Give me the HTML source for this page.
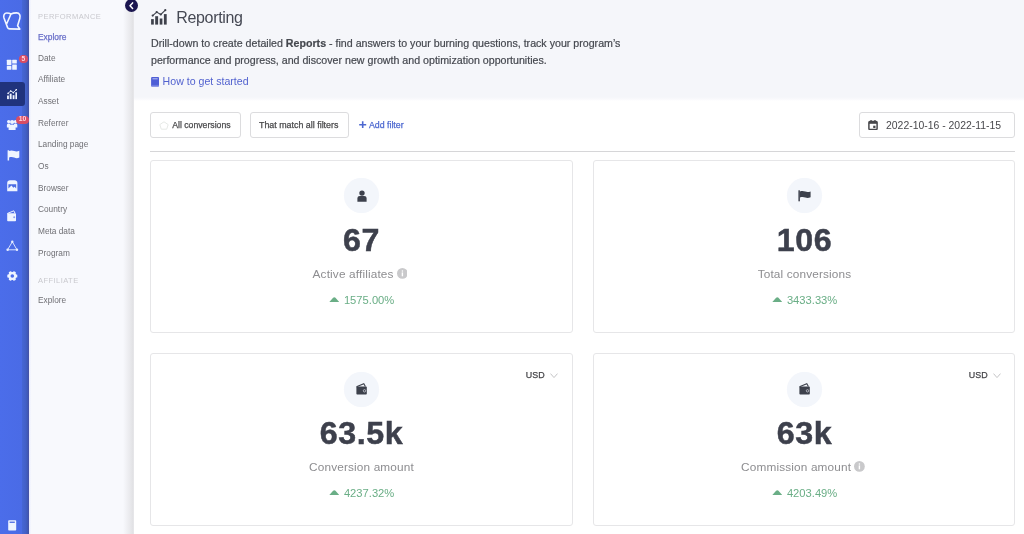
<!DOCTYPE html>
<html><head><meta charset="utf-8">
<style>
*{margin:0;padding:0;box-sizing:border-box}
html,body{width:1024px;height:534px;overflow:hidden;background:#fff;font-family:"Liberation Sans",sans-serif}
body{will-change:transform}
.a{position:absolute}
.t{position:absolute;line-height:1;white-space:nowrap}
#rail{left:0;top:0;width:29px;height:534px;background:linear-gradient(90deg,#4b6dea 0%,#4a6be6 74%,#4566d4 77%,#4260c8 88%,#3f58b4 96%,#4850a0 100%)}
#railedge{left:29px;top:0;width:2px;height:534px;background:linear-gradient(90deg,#e6eaff,#f7f8fd)}
#sub{left:29px;top:0;width:104px;height:534px;background:#f8f9fd}
#subsh{left:123px;top:0;width:11px;height:534px;background:linear-gradient(90deg,rgba(228,228,231,0) 0%,rgba(228,228,231,.7) 60%,rgba(226,226,229,1) 88%,rgba(232,232,235,1) 100%)}
#hdr{left:134px;top:0;width:890px;height:101px;background:linear-gradient(180deg,#f5f6fa 0,#f5f6fa 97px,#f9f9fc 99px,#fff 101px)}
.nav{left:38px;font-size:8.3px;color:#707075}
.sec{left:38px;font-size:7.5px;letter-spacing:.45px;color:#c9c9ce}
.btn{border:1px solid #dcdcde;border-radius:3px;background:#fff}
.card{border:1px solid #e6e6e8;border-radius:3px;background:#fff;width:422px;height:173px}
.circ{width:35px;height:35px;border-radius:50%;background:#f3f6fb;box-shadow:0 0 1px #f6f8fc}
.num{font-weight:700;font-size:32.2px;letter-spacing:.6px;-webkit-text-stroke:.5px #3d404c;color:#3d404c;text-align:center;width:422px}
.sb{-webkit-text-stroke:.25px currentColor}
.row{width:422px;display:flex;justify-content:center;align-items:center;white-space:nowrap}
.lbl{font-size:11.8px;line-height:12px;letter-spacing:.15px;color:#8d8d90}
.pct{font-size:11.2px;line-height:12px;color:#6aae86}
</style></head><body>
<div id="rail" class="a"></div>
<div id="sub" class="a"></div>
<div id="subsh" class="a"></div>
<div id="railedge" class="a"></div>
<div id="hdr" class="a"></div>

<!-- secondary nav -->
<div class="t sec" style="top:13.4px">PERFORMANCE</div>
<div class="t nav sb" style="top:32.8px;font-size:8.4px;color:#6a70c9">Explore</div>
<div class="t nav" style="top:53.8px">Date</div>
<div class="t nav" style="top:75.4px">Affiliate</div>
<div class="t nav" style="top:97.1px">Asset</div>
<div class="t nav" style="top:118.7px">Referrer</div>
<div class="t nav" style="top:140.4px">Landing page</div>
<div class="t nav" style="top:162.0px">Os</div>
<div class="t nav" style="top:183.7px">Browser</div>
<div class="t nav" style="top:205.3px">Country</div>
<div class="t nav" style="top:227.0px">Meta data</div>
<div class="t nav" style="top:248.8px">Program</div>
<div class="t sec" style="top:276.9px">AFFILIATE</div>
<div class="t nav" style="top:296.1px">Explore</div>

<!-- header -->
<div class="t" style="left:176.3px;top:9.6px;font-size:16px;letter-spacing:-0.35px;color:#464954">Reporting</div>
<div class="a" style="left:151px;top:35.1px;width:600px;font-size:10.65px;line-height:17px;color:#45484f;-webkit-text-stroke:.2px #45484f;white-space:nowrap">Drill-down to create detailed <b>Reports</b> - find answers to your burning questions, track your program’s<br>performance and progress, and discover new growth and optimization opportunities.</div>
<div class="t" style="left:162.6px;top:76.2px;font-size:10.6px;color:#5262cf">How to get started</div>

<!-- filters -->
<div class="a btn" style="left:150px;top:112px;width:91px;height:26px"></div>
<div class="t sb" style="left:172.2px;top:120.6px;font-size:8.7px;color:#4a4a4c">All conversions</div>
<div class="a btn" style="left:249.5px;top:112px;width:99px;height:26px"></div>
<div class="t sb" style="left:259px;top:120.6px;font-size:8.9px;color:#4a4a4c">That match all filters</div>
<div class="t sb" style="left:368.9px;top:120.9px;font-size:8.8px;color:#4d68d0">Add filter</div>
<div class="a btn" style="left:859px;top:112px;width:156px;height:26px"></div>
<div class="t" style="left:886px;top:120.6px;font-size:10.43px;color:#48484c">2022-10-16 - 2022-11-15</div>
<div class="a" style="left:150px;top:151px;width:865px;height:1px;background:#d6d6d8"></div>

<!-- cards -->
<div class="a card" style="left:150px;top:160px;width:423px"></div>
<div class="a card" style="left:593px;top:160px"></div>
<div class="a card" style="left:150px;top:353px;width:423px"></div>
<div class="a card" style="left:593px;top:353px"></div>

<div class="a circ" style="left:344px;top:178.4px"></div>
<div class="a circ" style="left:786.7px;top:178.4px"></div>
<div class="a circ" style="left:344px;top:371.7px"></div>
<div class="a circ" style="left:786.7px;top:371.7px"></div>

<div class="t num" style="left:150.5px;top:224.1px">67</div>
<div class="t num" style="left:593.5px;top:224.1px">106</div>
<div class="t num" style="left:150.5px;top:417.3px">63.5k</div>
<div class="t num" style="left:593.5px;top:417.3px">63k</div>



<div class="a row" style="left:150.5px;top:267.5px;height:12px"><span class="lbl">Active affiliates</span><svg width="10.8" height="10.8" viewBox="0 0 10.8 10.8" style="margin-left:3px;margin-right:3px;flex:none"><circle cx="5.4" cy="5.4" r="5.4" fill="#c9c9cb"/><rect x="4.7" y="4.4" width="1.4" height="3.9" fill="#fff"/><circle cx="5.4" cy="3" r=".8" fill="#fff"/></svg></div>
<div class="a row" style="left:150.5px;top:293.5px;height:12px"><svg width="10.6" height="5.6" viewBox="0 0 10.6 5.6" style="margin-right:4.6px;flex:none"><path d="M5.3 0.2 C5.8 0.2 6.1 0.4 6.5 0.8 L10.6 5.4 L0 5.4 L4.1 0.8 C4.5 0.4 4.8 0.2 5.3 0.2 Z" fill="#6aae86"/></svg><span class="pct">1575.00%</span></div>
<div class="a row" style="left:593.5px;top:267.5px;height:12px"><span class="lbl">Total conversions</span></div>
<div class="a row" style="left:593.5px;top:293.5px;height:12px"><svg width="10.6" height="5.6" viewBox="0 0 10.6 5.6" style="margin-right:4.6px;flex:none"><path d="M5.3 0.2 C5.8 0.2 6.1 0.4 6.5 0.8 L10.6 5.4 L0 5.4 L4.1 0.8 C4.5 0.4 4.8 0.2 5.3 0.2 Z" fill="#6aae86"/></svg><span class="pct">3433.33%</span></div>
<div class="a row" style="left:150.5px;top:460.5px;height:12px"><span class="lbl">Conversion amount</span></div>
<div class="a row" style="left:150.5px;top:486.5px;height:12px"><svg width="10.6" height="5.6" viewBox="0 0 10.6 5.6" style="margin-right:4.6px;flex:none"><path d="M5.3 0.2 C5.8 0.2 6.1 0.4 6.5 0.8 L10.6 5.4 L0 5.4 L4.1 0.8 C4.5 0.4 4.8 0.2 5.3 0.2 Z" fill="#6aae86"/></svg><span class="pct">4237.32%</span></div>
<div class="a row" style="left:593.5px;top:460.5px;height:12px"><span class="lbl">Commission amount</span><svg width="10.8" height="10.8" viewBox="0 0 10.8 10.8" style="margin-left:3px;margin-right:3px;flex:none"><circle cx="5.4" cy="5.4" r="5.4" fill="#c9c9cb"/><rect x="4.7" y="4.4" width="1.4" height="3.9" fill="#fff"/><circle cx="5.4" cy="3" r=".8" fill="#fff"/></svg></div>
<div class="a row" style="left:593.5px;top:486.5px;height:12px"><svg width="10.6" height="5.6" viewBox="0 0 10.6 5.6" style="margin-right:4.6px;flex:none"><path d="M5.3 0.2 C5.8 0.2 6.1 0.4 6.5 0.8 L10.6 5.4 L0 5.4 L4.1 0.8 C4.5 0.4 4.8 0.2 5.3 0.2 Z" fill="#6aae86"/></svg><span class="pct">4203.49%</span></div>
<div class="t sb" style="left:525.8px;top:371.2px;font-size:8.9px;color:#46464a">USD</div>
<div class="t sb" style="left:968.8px;top:371.2px;font-size:8.9px;color:#46464a">USD</div>


<svg class="a" style="left:549.6px;top:373px" width="8" height="5.5" viewBox="0 0 8 5.5"><polyline points="0.5,0.6 4,4.6 7.5,0.6" fill="none" stroke="#c4c4c6" stroke-width="1"/></svg>
<svg class="a" style="left:992.6px;top:373px" width="8" height="5.5" viewBox="0 0 8 5.5"><polyline points="0.5,0.6 4,4.6 7.5,0.6" fill="none" stroke="#c4c4c6" stroke-width="1"/></svg>
<!-- rail icons -->
<svg class="a" style="left:0;top:8px" width="24" height="24" viewBox="0 8 24 24"><path d="M6.8 13 C4.2 13 3.2 15.5 4 18 L7.6 27.6 C8 28.5 8.6 28.9 9.6 28.9 L19.9 29.1 L17.6 25.8 L19.8 18.6 C20.7 15.6 19.6 12.9 16.6 12.9 C14.6 12.9 12.6 13.2 11 14 C9.8 13.3 8.2 13 6.8 13 Z M11 14 L6.7 23.8" fill="none" stroke="#f2f6ff" stroke-width="1.6" stroke-linejoin="round"/></svg>
<svg class="a" style="left:0;top:50px" width="29" height="30" viewBox="0 50 29 30"><g fill="#eef4ff"><rect x="6.8" y="59.7" width="4.6" height="5.5" rx=".5"/><rect x="6.8" y="66" width="4.6" height="3.8" rx=".5"/><rect x="12.2" y="59.7" width="4.6" height="3.9" rx=".5"/><rect x="12.2" y="64.4" width="4.6" height="5.4" rx=".5"/></g></svg>
<div class="a" style="left:19.1px;top:54.7px;width:8.6px;height:8.6px;border-radius:50%;background:#d84d64"></div>
<div class="t" style="left:19.1px;top:55.9px;width:8.6px;text-align:center;font-size:6.6px;font-weight:700;color:#ffd6de">5</div>
<div class="a" style="left:0;top:82px;width:25px;height:24px;background:#20337d;border-radius:0 3px 3px 0"></div>
<svg class="a" style="left:6.6px;top:89.4px" width="10.4" height="10.4" viewBox="0 0 16 16"><g fill="#f0f4ff"><rect x="0.1" y="10.1" width="2.8" height="5.5"/><rect x="4.2" y="7.2" width="2.9" height="8.4"/><rect x="8.7" y="9.5" width="2.8" height="6.1"/><rect x="12.9" y="5.1" width="2.8" height="10.5"/></g><polyline points="1.7,6.6 5.7,3.1 9.8,5.5 14.3,1.2" fill="none" stroke="#f0f4ff" stroke-width="1.3"/><g fill="#f0f4ff"><circle cx="1.7" cy="6.6" r="1.3"/><circle cx="5.7" cy="3.1" r="1.3"/><circle cx="9.8" cy="5.5" r="1.3"/><circle cx="14.3" cy="1.2" r="1.3"/></g></svg>
<svg class="a" style="left:6px;top:118px" width="13" height="13" viewBox="0 0 13 13"><g fill="#eef4ff"><circle cx="2.7" cy="3.6" r="1.7"/><circle cx="9.5" cy="3.6" r="1.7"/><circle cx="6.1" cy="4" r="2.1"/><path d="M0.9 9.6 L0.9 7.4 C0.9 6.2 1.6 5.6 2.7 5.6 C3.8 5.6 4.4 6.2 4.4 7 L4.4 9.6 Z"/><path d="M7.8 9.6 L7.8 7 C7.8 6.2 8.4 5.6 9.5 5.6 C10.6 5.6 11.3 6.2 11.3 7.4 L11.3 9.6 Z"/><path d="M2.6 12.1 L2.6 8.9 C2.6 7.3 4.2 6.4 6.1 6.4 C8 6.4 9.6 7.3 9.6 8.9 L9.6 12.1 Z"/></g></svg>
<div class="a" style="left:16px;top:115.6px;width:13px;height:8px;border-radius:4px;background:#d84d64"></div>
<div class="t" style="left:16.5px;top:116.4px;width:12px;text-align:center;font-size:6.8px;font-weight:700;color:#ffd6de">10</div>
<svg class="a" style="left:6.5px;top:149.5px" width="13" height="11" viewBox="0 0 13 11"><rect x="0.6" y="0.3" width="1.5" height="10.2" fill="#eef4ff"/><path d="M2 1 C4 0.2 5.5 0.4 7.2 1 C9 1.6 10.6 1.5 12.3 0.8 L12.3 7.6 C10.6 8.3 9 8.3 7.2 7.6 C5.5 7 4 6.9 2 7.6 Z" fill="#eef4ff"/></svg>
<svg class="a" style="left:6.5px;top:179.8px" width="11" height="12" viewBox="0 0 11 12"><path d="M0.2 3 C0.2 1.2 1.4 0.2 3 0.2 L7.5 0.2 C9.2 0.2 10.4 1.2 10.4 3 L10.4 11.2 L0.2 11.2 Z" fill="#eef4ff"/><path d="M1.4 8.6 L1.4 4.2 L9.2 4.2 L9.2 8.6 L7.6 6.8 L6.4 7.8 L4.4 5.6 Z" fill="#4b6ce4"/></svg>
<svg class="a" style="left:7.3px;top:209.5px" width="10" height="12" viewBox="0 0 10 12"><path d="M0.3 3.5 L6.8 0.8 L8 3.2" fill="none" stroke="#eef4ff" stroke-width="1"/><rect x="0.2" y="3.2" width="8.8" height="8" rx=".8" fill="#eef4ff"/><circle cx="7.2" cy="7.3" r="1" fill="#8aa0ee"/></svg>
<svg class="a" style="left:6px;top:240px" width="13" height="12" viewBox="0 0 13 12"><path d="M6.3 1.8 L1.6 9.8 L11 9.8 Z" fill="none" stroke="#e8eeff" stroke-width=".9" stroke-linejoin="round"/><g fill="#e8eeff"><circle cx="6.3" cy="1.8" r="1.2"/><circle cx="1.6" cy="9.8" r="1.2"/><circle cx="11" cy="9.8" r="1.2"/></g></svg>
<svg class="a" style="left:6.5px;top:271.2px" width="11" height="10" viewBox="0 0 11 10"><g fill="#eef4ff"><circle cx="5.3" cy="5" r="4"/><rect x="3.9" y="0" width="2.8" height="2.2" rx=".5" transform="rotate(30 5.3 5)"/><rect x="3.9" y="0" width="2.8" height="2.2" rx=".5" transform="rotate(90 5.3 5)"/><rect x="3.9" y="0" width="2.8" height="2.2" rx=".5" transform="rotate(150 5.3 5)"/><rect x="3.9" y="0" width="2.8" height="2.2" rx=".5" transform="rotate(210 5.3 5)"/><rect x="3.9" y="0" width="2.8" height="2.2" rx=".5" transform="rotate(270 5.3 5)"/><rect x="3.9" y="0" width="2.8" height="2.2" rx=".5" transform="rotate(330 5.3 5)"/></g><circle cx="5.3" cy="5" r="1.8" fill="#4b6dea"/></svg>
<svg class="a" style="left:7.8px;top:519.8px" width="9" height="11" viewBox="0 0 9 11"><rect x="0.2" y="0.2" width="8" height="10.4" rx=".8" fill="#eef4ff"/><rect x="1.6" y="1.6" width="5.2" height="1.3" fill="#4b6ce4"/></svg>
<!-- collapse button -->
<div class="a" style="left:124.8px;top:-1px;width:13.4px;height:13.4px;border-radius:50%;background:#1b1650"></div>
<svg class="a" style="left:124.8px;top:-1px" width="13.4" height="13.4" viewBox="0 0 13.4 13.4"><polyline points="7.6,3.9 5,6.7 7.6,9.5" fill="none" stroke="#fff" stroke-width="1.5" stroke-linecap="round" stroke-linejoin="round"/></svg>
<!-- header icons -->
<svg class="a" style="left:151px;top:8.5px" width="16" height="16" viewBox="0 0 16 16"><g fill="#3e414b"><rect x="0.1" y="10.1" width="2.7" height="5.5"/><rect x="4.2" y="7.2" width="2.9" height="8.4"/><rect x="8.7" y="9.5" width="2.7" height="6.1"/><rect x="12.9" y="5.1" width="2.8" height="10.5"/></g><polyline points="1.7,6.6 5.7,3.1 9.8,5.5 14.3,1.2" fill="none" stroke="#3e414b" stroke-width="1.1"/><g fill="#3e414b"><circle cx="1.7" cy="6.6" r="1.1"/><circle cx="5.7" cy="3.1" r="1.1"/><circle cx="9.8" cy="5.5" r="1.1"/><circle cx="14.3" cy="1.2" r="1.1"/></g></svg>
<svg class="a" style="left:151px;top:77px" width="8.4" height="9.6" viewBox="0 0 8.4 9.6"><rect x="0.1" y="0.1" width="8.1" height="9.3" rx="1" fill="#4e5ed6"/><rect x="1.5" y="1.3" width="5.2" height="1" fill="#b9c0f0"/><rect x="0.1" y="7.9" width="8.1" height="1.5" fill="#6d7be0"/></svg>
<!-- filter icons -->
<svg class="a" style="left:158.5px;top:120.5px" width="10" height="9" viewBox="0 0 10 9"><path d="M5 0.8 L9.2 3.6 L7.7 8.2 L2.3 8.2 L0.8 3.6 Z" fill="none" stroke="#e6e9e6" stroke-width="1"/></svg>
<svg class="a" style="left:359.4px;top:121px" width="7.4" height="7.4" viewBox="0 0 7.4 7.4"><path d="M3.7 0.2 V7.2 M0.2 3.7 H7.2" stroke="#4d68d0" stroke-width="1.6"/></svg>
<svg class="a" style="left:868.2px;top:120.2px" width="10" height="10.2" viewBox="0 0 10 10.2"><rect x="0.9" y="1.6" width="8.2" height="8" rx="1" fill="none" stroke="#48484c" stroke-width="1.5"/><rect x="0.9" y="1.6" width="8.2" height="2.2" fill="#48484c"/><rect x="2.4" y="0" width="1.3" height="2.5" fill="#48484c"/><rect x="6.3" y="0" width="1.3" height="2.5" fill="#48484c"/><rect x="5.2" y="5.7" width="2.3" height="2.3" fill="#48484c"/></svg>
<!-- card icons -->
<svg class="a" style="left:356.5px;top:189.8px" width="10" height="12" viewBox="0 0 10 12"><circle cx="5" cy="3.1" r="2.7" fill="#3d414c"/><path d="M0.4 11.7 L0.4 8.6 C0.4 6.9 1.4 6.1 2.8 6.1 L7.2 6.1 C8.6 6.1 9.6 6.9 9.6 8.6 L9.6 11.7 Z" fill="#3d414c"/></svg>
<svg class="a" style="left:797.5px;top:190.3px" width="13" height="11.5" viewBox="0 0 13 11.5"><rect x="0.4" y="0.3" width="1.5" height="11" fill="#3d414c"/><path d="M1.9 1.5 C4 0.8 5.6 1 7.3 1.6 C9 2.2 10.6 2.1 12.6 1.4 L12.6 7.3 C10.6 8 9 8.1 7.3 7.5 C5.6 6.9 4 6.8 1.9 7.5 Z" fill="#3d414c"/></svg>
<svg class="a" style="left:355.5px;top:383px" width="12" height="12" viewBox="0 0 12 12"><path d="M0.5 3.8 L7.8 0.7 L9.4 3.6" fill="none" stroke="#3d414c" stroke-width="1.1"/><rect x="0.4" y="3.6" width="10.4" height="7.9" rx=".8" fill="#3d414c"/><circle cx="8.5" cy="7.8" r="1.2" fill="none" stroke="#c9ccd4" stroke-width=".8"/></svg>
<svg class="a" style="left:798.5px;top:383px" width="12" height="12" viewBox="0 0 12 12"><path d="M0.5 3.8 L7.8 0.7 L9.4 3.6" fill="none" stroke="#3d414c" stroke-width="1.1"/><rect x="0.4" y="3.6" width="10.4" height="7.9" rx=".8" fill="#3d414c"/><circle cx="8.5" cy="7.8" r="1.2" fill="none" stroke="#c9ccd4" stroke-width=".8"/></svg>
</body></html>
